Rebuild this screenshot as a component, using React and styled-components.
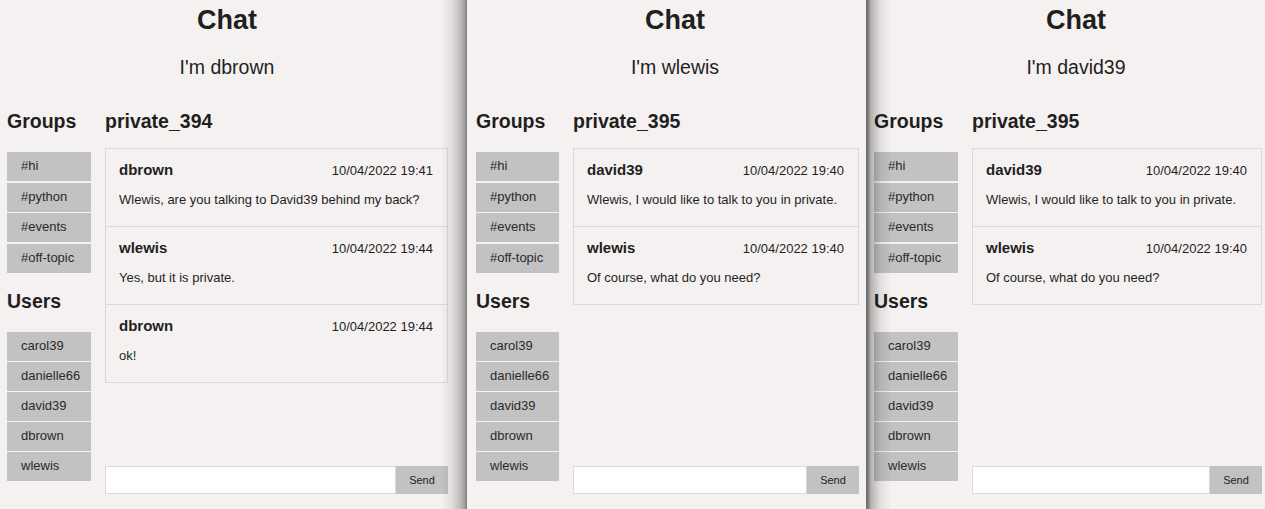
import React from "react";
import styled, { createGlobalStyle } from "styled-components";

const GROUPS = ["#hi", "#python", "#events", "#off-topic"];
const USERS = ["carol39", "danielle66", "david39", "dbrown", "wlewis"];

const PRIVATE_395 = [
  {
    author: "david39",
    date: "10/04/2022 19:40",
    text: "Wlewis, I would like to talk to you in private.",
  },
  { author: "wlewis", date: "10/04/2022 19:40", text: "Of course, what do you need?" },
];

const WINDOWS = [
  {
    me: "dbrown",
    room: "private_394",
    width: 467,
    headWidth: 440,
    pad: "0 19px 15px 7px",
    shadow: "right",
    messages: [
      {
        author: "dbrown",
        date: "10/04/2022 19:41",
        text: "Wlewis, are you talking to David39 behind my back?",
      },
      { author: "wlewis", date: "10/04/2022 19:44", text: "Yes, but it is private." },
      { author: "dbrown", date: "10/04/2022 19:44", text: "ok!" },
    ],
  },
  {
    me: "wlewis",
    room: "private_395",
    width: 399,
    headWidth: 398,
    pad: "0 7px 15px 9px",
    side: 83,
    messages: PRIVATE_395,
  },
  {
    me: "david39",
    room: "private_395",
    width: 399,
    headWidth: 404,
    pad: "0 3px 15px 8px",
    shadow: "left",
    messages: PRIVATE_395,
  },
];

const GlobalStyle = createGlobalStyle`
  html, body {
    margin: 0;
    padding: 0;
    background: #f4f1f0;
  }
  body {
    font-family: "Liberation Sans", Arial, Helvetica, sans-serif;
    color: #1f1f1f;
  }
`;

const Stage = styled.div`
  display: flex;
  width: 1265px;
  height: 509px;
  overflow: hidden;
`;

const Window = styled.div`
  position: relative;
  flex: 0 0 ${(p) => p.$width}px;
  width: ${(p) => p.$width}px;
  height: 509px;
  box-sizing: border-box;
  padding: ${(p) => p.$pad};
  display: flex;
  flex-direction: column;
  background: #f4f1f0;
  overflow: hidden;

  &::after {
    content: "";
    display: ${(p) => (p.$shadow ? "block" : "none")};
    position: absolute;
    top: 0;
    bottom: 0;
    width: 26px;
    z-index: 2;
    pointer-events: none;
    ${(p) =>
      p.$shadow === "right"
        ? `right: 0;
    background: linear-gradient(to right, rgba(0,0,0,0) 0%, rgba(0,0,0,0.08) 40%, rgba(0,0,0,0.22) 75%, rgba(0,0,0,0.35) 92%, rgba(0,0,0,0.5) 100%);`
        : `left: 0;
    background: linear-gradient(to left, rgba(0,0,0,0) 0%, rgba(0,0,0,0.08) 45%, rgba(0,0,0,0.25) 80%, rgba(0,0,0,0.5) 93%, rgba(0,0,0,0.55) 100%);`}
  }
`;

const Head = styled.header`
  width: ${(p) => p.$width}px;
  text-align: center;
  flex: none;
`;

const Title = styled.h1`
  margin: 0;
  padding-top: 5px;
  font-size: 27px;
  line-height: 31px;
  font-weight: 700;
`;

const Me = styled.p`
  margin: 20px 0 0;
  font-size: 19.5px;
  line-height: 22px;
`;

const Body = styled.div`
  flex: 1;
  display: flex;
  gap: 14px;
  margin-top: 32px;
  min-height: 0;
`;

const Sidebar = styled.aside`
  flex: 0 0 ${(p) => p.$width}px;
  display: flex;
  flex-direction: column;
`;

const SectionTitle = styled.h2`
  margin: ${(p) => (p.$first ? "0" : "17px 0 0")};
  font-size: 19.5px;
  line-height: 22px;
  font-weight: 700;
`;

const List = styled.div`
  display: flex;
  flex-direction: column;
  gap: ${(p) => p.$gap}px;
  margin-top: 20px;
`;

const Item = styled.div`
  height: 29px;
  line-height: 28px;
  padding-left: 14px;
  background: #c2c2c2;
  font-size: 13px;
  color: #2a2a2a;
`;

const Main = styled.main`
  flex: 1;
  display: flex;
  flex-direction: column;
  min-width: 0;
`;

const Panel = styled.div`
  margin-top: 16px;
  border: 1px solid #dcd8d7;
  background: #f4f1f0;
`;

const Message = styled.div`
  padding: 12px 14px 17px 13px;
  & + & {
    border-top: 1px solid #dcd8d7;
  }
`;

const MessageHead = styled.div`
  display: flex;
  justify-content: space-between;
  align-items: baseline;
  height: 18px;
`;

const Author = styled.span`
  font-size: 15px;
  font-weight: 700;
`;

const Stamp = styled.span`
  font-size: 13px;
`;

const Text = styled.p`
  margin: 12px 0 0;
  font-size: 13px;
  line-height: 18px;
`;

const Compose = styled.form`
  margin-top: auto;
  display: flex;
  height: 28px;
`;

const Field = styled.input`
  flex: 1;
  min-width: 0;
  box-sizing: border-box;
  border: 1px solid #dedad9;
  background: #fff;
  outline: none;
`;

const SendButton = styled.button`
  flex: 0 0 52px;
  border: none;
  background: #c2c2c2;
  font-family: "Liberation Sans", Arial, sans-serif;
  font-size: 11px;
  color: #222;
  padding: 0;
`;

const ChatWindow = ({ win }) => (
  <Window $width={win.width} $pad={win.pad} $shadow={win.shadow}>
    <Head $width={win.headWidth}>
      <Title>Chat</Title>
      <Me>I'm {win.me}</Me>
    </Head>
    <Body>
      <Sidebar $width={win.side || 84}>
        <SectionTitle $first>Groups</SectionTitle>
        <List $gap={1.5}>
          {GROUPS.map((g) => (
            <Item key={g}>{g}</Item>
          ))}
        </List>
        <SectionTitle>Users</SectionTitle>
        <List $gap={1.2}>
          {USERS.map((u) => (
            <Item key={u}>{u}</Item>
          ))}
        </List>
      </Sidebar>
      <Main>
        <SectionTitle $first>{win.room}</SectionTitle>
        <Panel>
          {win.messages.map((m, i) => (
            <Message key={i}>
              <MessageHead>
                <Author>{m.author}</Author>
                <Stamp>{m.date}</Stamp>
              </MessageHead>
              <Text>{m.text}</Text>
            </Message>
          ))}
        </Panel>
        <Compose onSubmit={(e) => e.preventDefault()}>
          <Field type="text" />
          <SendButton type="submit">Send</SendButton>
        </Compose>
      </Main>
    </Body>
  </Window>
);

const App = () => (
  <>
    <GlobalStyle />
    <Stage>
      {WINDOWS.map((w) => (
        <ChatWindow key={w.me} win={w} />
      ))}
    </Stage>
  </>
);

export default App;
